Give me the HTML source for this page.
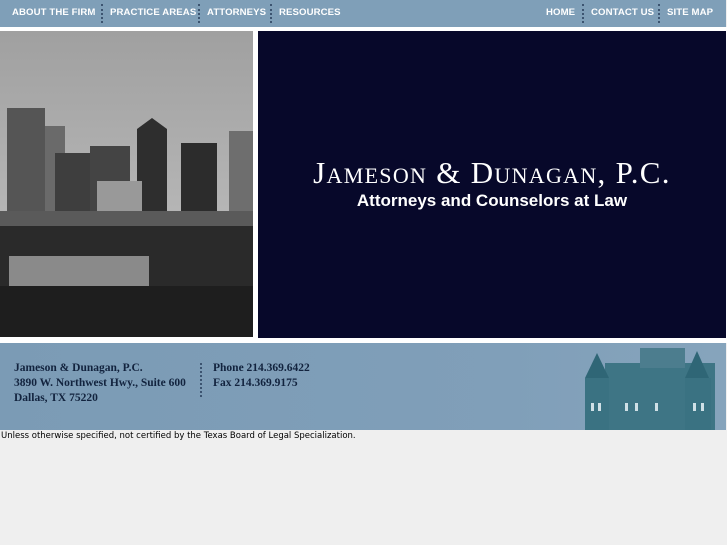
<!DOCTYPE html>
<html><head><meta charset="utf-8"><style>
body{margin:0;background:#efefef;width:727px;height:545px;overflow:hidden;font-family:"DejaVu Sans","Liberation Sans",sans-serif}
.nav{position:absolute;left:0;top:0;width:726px;height:27px;background:#7f9fb8}
.nav span{position:absolute;top:7px;color:#fff;font-family:"Liberation Sans",sans-serif;font-size:9.6px;font-weight:bold;white-space:nowrap;letter-spacing:0.1px}
.dots{position:absolute;top:4px;width:0;height:19px;border-left:2px dotted #3c5470}
.wrap{position:absolute;left:0;top:27px;width:727px;height:316px;background:#fff}
.navy{position:absolute;left:258px;top:31px;width:468px;height:307px;background:#07082a;color:#fff;text-align:center}
.foot{position:absolute;left:0;top:343px;width:726px;height:87px;background:linear-gradient(90deg,#7b9bb5,#809fb9 70%,#86a4bc)}
.foot div{position:absolute;font-family:"Liberation Serif",serif;color:#12233e;font-size:11.5px;line-height:15px;white-space:nowrap;font-weight:600}
</style></head><body>
<div class="nav">
<span style="left:12px">ABOUT THE FIRM</span><div class="dots" style="left:101px"></div>
<span style="left:110px">PRACTICE AREAS</span><div class="dots" style="left:198px"></div>
<span style="left:207px">ATTORNEYS</span><div class="dots" style="left:270px"></div>
<span style="left:279px">RESOURCES</span>
<span style="left:546px">HOME</span><div class="dots" style="left:582px"></div>
<span style="left:591px">CONTACT US</span><div class="dots" style="left:658px"></div>
<span style="left:667px">SITE MAP</span>
</div>
<div class="wrap"></div>
<svg style="position:absolute;left:0;top:31px" width="253" height="306">
<defs><linearGradient id="sk" x1="0" y1="0" x2="0" y2="1"><stop offset="0" stop-color="#a0a0a0"/><stop offset="1" stop-color="#c4c4c4"/></linearGradient></defs>
<rect width="253" height="306" fill="url(#sk)"/>
<rect x="7" y="77" width="38" height="110" fill="#555"/>
<rect x="45" y="95" width="20" height="90" fill="#6a6a6a"/>
<rect x="55" y="122" width="75" height="80" fill="#3e3e3e"/>
<rect x="90" y="115" width="40" height="90" fill="#444"/>
<polygon points="137,98 152,87 167,98 167,195 137,195" fill="#2e2e2e"/>
<rect x="181" y="112" width="36" height="80" fill="#2c2c2c"/>
<rect x="229" y="100" width="24" height="80" fill="#6e6e6e"/>
<rect x="97" y="150" width="45" height="30" fill="#999"/>
<rect x="0" y="180" width="253" height="20" fill="#5a5a5a"/>
<rect x="0" y="195" width="253" height="111" fill="#2a2a2a"/>
<rect x="9" y="225" width="140" height="30" fill="#8a8a8a"/>
<rect x="0" y="255" width="253" height="51" fill="#1e1e1e"/>
</svg>
<div class="navy">
<div style="position:absolute;left:0;right:0;top:124px;font-family:'Liberation Serif',serif;font-size:31px;font-variant:small-caps;letter-spacing:1.3px">Jameson &amp; Dunagan, P.C.</div>
<div style="position:absolute;left:0;right:0;top:160px;font-family:'Liberation Sans',sans-serif;font-size:17px;font-weight:bold">Attorneys and Counselors at Law</div>
</div>
<div class="foot">
<div style="left:14px;top:18px">Jameson &amp; Dunagan, P.C.<br>3890 W. Northwest Hwy., Suite 600<br>Dallas, TX 75220</div>
<span style="position:absolute;left:200px;top:20px;height:34px;border-left:2px dotted #3c5470"></span>
<div style="left:213px;top:18px">Phone 214.369.6422<br>Fax 214.369.9175</div>
<svg style="position:absolute;left:575px;top:0" width="151" height="87">
<rect x="30" y="20" width="110" height="67" fill="#3e7585"/>
<rect x="65" y="5" width="45" height="20" fill="#4c7d8e"/>
<polygon points="10,35 22,10 34,35" fill="#2f6676"/>
<polygon points="110,35 122,8 134,35" fill="#2f6676"/>
<rect x="10" y="35" width="24" height="52" fill="#3a7282"/>
<rect x="110" y="35" width="26" height="52" fill="#3a7282"/>
<g fill="#cfe0e6"><rect x="16" y="60" width="3" height="8"/><rect x="23" y="60" width="3" height="8"/><rect x="50" y="60" width="3" height="8"/><rect x="60" y="60" width="3" height="8"/><rect x="80" y="60" width="3" height="8"/><rect x="118" y="60" width="3" height="8"/><rect x="126" y="60" width="3" height="8"/></g>
</svg>
</div>
<div style="position:absolute;left:1px;top:431px;font-size:8.5px;color:#000">Unless otherwise specified, not certified by the Texas Board of Legal Specialization.</div>
</body></html>
